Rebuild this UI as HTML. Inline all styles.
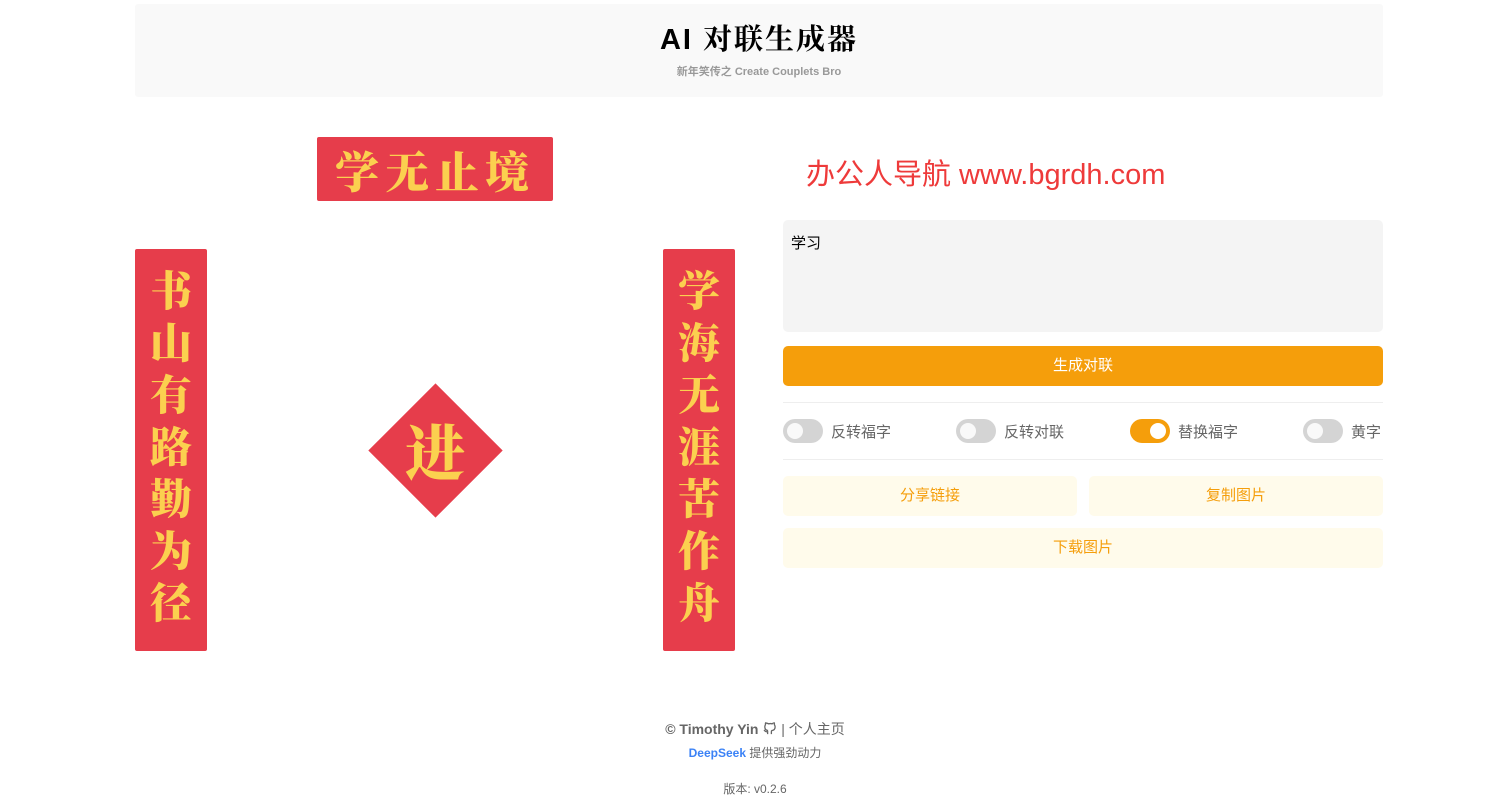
<!DOCTYPE html>
<html><head><meta charset="utf-8"><style>
body{margin:0;background:#fff;font-family:"Liberation Sans","Noto Sans CJK SC",sans-serif;width:1510px;height:806px;position:relative;overflow:hidden}
.hdr{position:absolute;left:135px;top:4px;width:1248px;height:93px;background:#f9f9f9;border-radius:3px;text-align:center}
.hdr h1{margin:0;padding-top:20px;font-size:29px;font-weight:bold;color:#000;letter-spacing:2px;line-height:32px;font-family:"Liberation Sans","Noto Serif CJK SC",serif}
.hdr p{margin:7px 0 0;font-size:11px;font-weight:bold;color:#999}
.red{position:absolute;background:#e63d4b;color:#fbd04f;font-family:"Noto Serif CJK SC",serif;font-weight:900;border-radius:2px}
.top{left:317px;top:137px;width:236px;height:64px;font-size:44px;line-height:64px;text-align:center;letter-spacing:6px}
.side{top:249px;width:72px;height:402px;font-size:42px;line-height:52px;text-align:center;padding-top:14px;box-sizing:border-box}
.dia{position:absolute;left:388px;top:403px;width:95px;height:95px;background:#e63d4b;transform:rotate(45deg)}
.fu{position:absolute;left:385px;top:415px;width:100px;text-align:center;font-size:60px;line-height:70px;color:#fbd04f;font-family:"Noto Serif CJK SC",serif;font-weight:900}
.ad{position:absolute;left:806px;top:151px;font-size:29px;color:#ee3a3a;font-family:"Liberation Sans","Noto Sans CJK SC",sans-serif}
.ta{position:absolute;left:783px;top:220px;width:600px;height:112px;background:#f4f4f4;border-radius:5px;font-size:15px;padding:12px 8px;box-sizing:border-box}
.btn{position:absolute;left:783px;top:346px;width:600px;height:40px;background:#f59e0b;border-radius:5px;color:#fff;font-size:15px;text-align:center;line-height:40px}
.hr{position:absolute;left:783px;width:600px;height:1px;background:#eee}
.tg{position:absolute;top:419px;height:24px;display:flex;align-items:center;font-size:15px;color:#666}
.sw{width:40px;height:24px;border-radius:12px;background:#d4d4d4;position:relative;margin-right:8px}
.sw::after{content:"";position:absolute;left:4px;top:4px;width:16px;height:16px;border-radius:50%;background:#f9f9f9}
.sw.on{background:#f59e0b}.sw.on::after{left:20px;background:#fff}
.lb{position:absolute;height:40px;background:#fffbeb;border-radius:5px;color:#f59e0b;font-size:15px;text-align:center;line-height:40px}
.ft{position:absolute;left:0;width:1510px;text-align:center;color:#666}
</style></head><body>
<div class="hdr"><h1>AI 对联生成器</h1><p>新年笑传之 Create Couplets Bro</p></div>
<div class="red top">学无止境</div>
<div class="red side" style="left:135px">书<br>山<br>有<br>路<br>勤<br>为<br>径</div>
<div class="red side" style="left:663px">学<br>海<br>无<br>涯<br>苦<br>作<br>舟</div>
<div class="dia"></div><div class="fu">进</div>
<div class="ad">办公人导航 www.bgrdh.com</div>
<div class="ta">学习</div>
<div class="btn">生成对联</div>
<div class="hr" style="top:402px"></div>
<div class="tg" style="left:783px"><div class="sw"></div>反转福字</div>
<div class="tg" style="left:956px"><div class="sw"></div>反转对联</div>
<div class="tg" style="left:1130px"><div class="sw on"></div>替换福字</div>
<div class="tg" style="left:1303px"><div class="sw"></div>黄字</div>
<div class="hr" style="top:459px"></div>
<div class="lb" style="left:783px;top:476px;width:294px">分享链接</div>
<div class="lb" style="left:1089px;top:476px;width:294px">复制图片</div>
<div class="lb" style="left:783px;top:528px;width:600px">下载图片</div>
<div class="ft" style="top:719px;font-size:14px"><b>© Timothy Yin</b> <svg width="15" height="15" viewBox="0 0 16 16" style="vertical-align:-2px"><path d="M6 14v-2.5c-3 .5-3-1.5-4-2m8 4.5v-2.5c0-1 .5-1.3.5-1.3 2-.3 3.500-1.2 3.5-4 0-1-.3-1.6-.8-2.200.1-.5.1-1.2-.1-2-1 0-1.800.6-2.200 1a7 7 0 0 0-3.800 0C5.500 2.600 4.800 2 3.800 2c-.2.8-.2 1.500-.1 2C3.200 4.600 3 5.300 3 6.200c0 2.800 1.500 3.700 3.500 4" fill="none" stroke="#666" stroke-width="1.4"/></svg> | 个人主页</div>
<div class="ft" style="top:744px;font-size:12px"><b style="color:#3b82f6">DeepSeek</b> 提供强劲动力</div>
<div class="ft" style="top:780px;font-size:12px">版本: v0.2.6</div>
</body></html>
